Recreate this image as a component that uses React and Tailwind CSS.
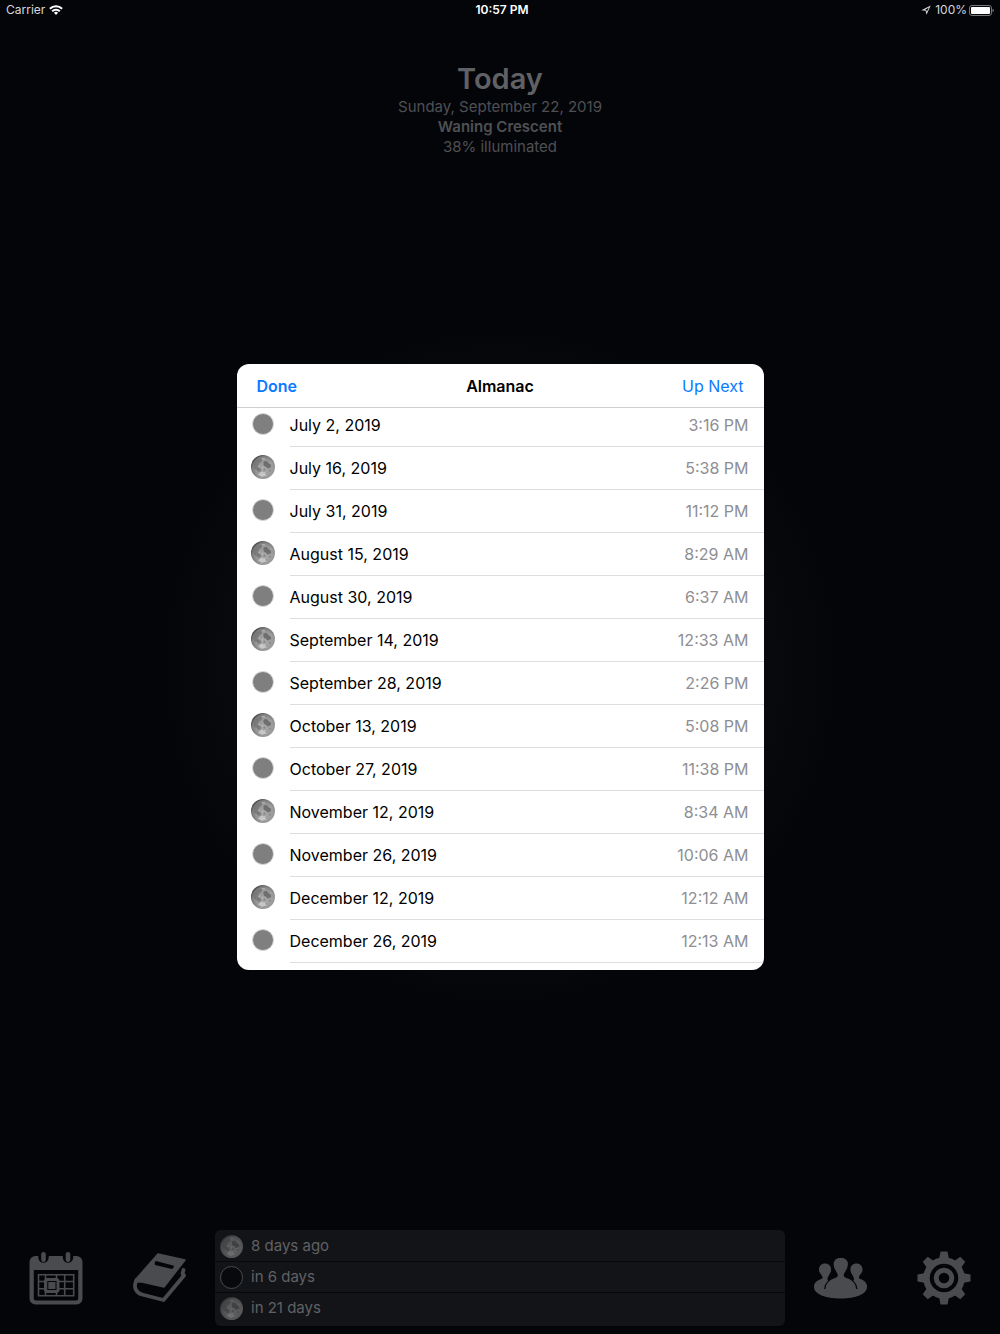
import { useState } from 'react';

const phases = [
  { date: 'July 2, 2019', time: '3:16 PM', full: false },
  { date: 'July 16, 2019', time: '5:38 PM', full: true },
  { date: 'July 31, 2019', time: '11:12 PM', full: false },
  { date: 'August 15, 2019', time: '8:29 AM', full: true },
  { date: 'August 30, 2019', time: '6:37 AM', full: false },
  { date: 'September 14, 2019', time: '12:33 AM', full: true },
  { date: 'September 28, 2019', time: '2:26 PM', full: false },
  { date: 'October 13, 2019', time: '5:08 PM', full: true },
  { date: 'October 27, 2019', time: '11:38 PM', full: false },
  { date: 'November 12, 2019', time: '8:34 AM', full: true },
  { date: 'November 26, 2019', time: '10:06 AM', full: false },
  { date: 'December 12, 2019', time: '12:12 AM', full: true },
  { date: 'December 26, 2019', time: '12:13 AM', full: false },
];

const upcoming = [
  { label: '8 days ago', full: true },
  { label: 'in 6 days', full: false },
  { label: 'in 21 days', full: true },
];

const FullMoon = ({ className }) => (
  <svg viewBox="0 0 24 24" className={className} aria-hidden="true">
    <defs>
      <radialGradient id="moonShade" cx="0.6" cy="0.6" r="0.64">
        <stop offset="0" stopColor="#a8a8a8" />
        <stop offset="0.6" stopColor="#989898" />
        <stop offset="0.85" stopColor="#7c7c7c" />
        <stop offset="1" stopColor="#3c3c3c" />
      </radialGradient>
      <filter id="mariaBlur">
        <feGaussianBlur stdDeviation="0.4" />
      </filter>
    </defs>
    <circle cx="12" cy="12" r="12" fill="url(#moonShade)" />
    <g filter="url(#mariaBlur)">
      <path fill="#6c6c6c" opacity="0.6" d="M3 9c1-3 4-5 7-5 2 1 1 3-1 4s-1 5-3 7c-3 0-4-3-3-6z" />
      <path fill="#545454" opacity="0.65" d="M13 6.500c1.500-1 3.500-.5 4 1s1.500.5 2.500 2 .5 3.500-.5 3-1.500 1.500-2.500 1-1-2-2-2-2-1-2-2.500-.5-1.500.5-2.500z" />
      <path fill="#5e5e5e" opacity="0.5" d="M6 13c2-1 4 0 4 2s-2 2-4 1zM18.500 14.500c1 0 1.500 1 1 2s-1.500 0-1-2zM12.500 14c1-.5 2 0 2 1s-1.500 1-2 0z" />
      <path fill="#d8d8d8" opacity="0.7" d="M9 17.500l2-1 1.500 1 2-.5-.5 2 2 1.500-3 .5-2 1-2-1.500-2-.5z" />
      <path fill="#c4c4c4" opacity="0.6" d="M7.500 10.500h1.500v1.500h-1.500zM11 3h3v1.500h-3zM10.500 12l1.500-.5.500 2-1.500.5zM19 7l1.500 1-.5 1z" />
    </g>
  </svg>
);

const CalendarIcon = () => (
  <svg viewBox="0 0 54 54" className="size-[54px]" fill="currentColor" aria-hidden="true">
    <path
      fillRule="evenodd"
      d="M6.500 5H9.300V6.500a5.200 5.200 0 0 0 10.400 0V5H33.800V6.500a5.200 5.200 0 0 0 10.400 0V5H47.500a6 6 0 0 1 6 6V47.500a6 6 0 0 1-6 6H6.500a6 6 0 0 1-6-6V11a6 6 0 0 1 6-6zM4.800 19V47.500a2 2 0 0 0 2 2H47.200a2 2 0 0 0 2-2V19z"
    />
    <rect x="12.200" y="1" width="4.600" height="10" rx="2.300" />
    <rect x="36.700" y="1" width="4.600" height="10" rx="2.300" />
    <path
      fill="none"
      stroke="currentColor"
      strokeWidth="1.600"
      d="M9.500 23.700H44.700V44.800H9.500zM9.500 30.500H44.700M9.500 37.800H44.700M16.500 23.700V44.800M27.500 23.700V44.800M35.700 23.700V44.800"
    />
    {/* highlighted day */}
    <path d="M17 27H28.500L30.500 29V40L28.500 42H17L15 40V29z" />
    <rect x="18.800" y="30.500" width="8.200" height="8" fill="none" stroke="#040509" strokeWidth="1" />
  </svg>
);

const BookIcon = () => (
  <svg viewBox="0 0 54 54" className="size-[54px]" aria-hidden="true">
    <path
      fill="currentColor"
      stroke="currentColor"
      strokeWidth="1.500"
      strokeLinejoin="round"
      d="M25 3L52 9 31 36 9 31 3 31Q1 30 3 28z"
    />
    <path
      fill="none"
      stroke="currentColor"
      strokeWidth="3.800"
      strokeLinejoin="round"
      strokeLinecap="round"
      d="M3.500 29C0 36 3 42 9 43.500L30.500 49 51 24.500 49.500 22.500 50.500 19"
    />
    <path fill="#040509" d="M23 10L41 14.700Q41 17 39 18L22 13.900Q21 11 23 10z" />
  </svg>
);

const PeopleIcon = () => (
  <svg viewBox="-1 0 54 54" className="size-[54px]" fill="currentColor" aria-hidden="true">
    <path d="M11 12.500c4 0 6.500 3 6 7-.4 3.600-3.500 5.800-3.500 8.500 0 1.500 1.500 2 3 2.500L10.500 38 0 36c0-4 3-6.500 6.500-7.700 1-.3 2-.8 2-1.800C8.500 24 5.400 22.500 5 19.500c-.4-4 2-7 6-7z" />
    <path d="M42.500 12.500c-4 0-6.500 3-6 7 .4 3.600 3.500 5.800 3.500 8.500 0 1.500-1.500 2-3 2.500L43 38l10-2c0-4-2.500-6.500-6-7.700-1-.3-2-.8-2-1.800 0-2.500 3.100-4 3.500-7 .4-4-2-7-6-7z" />
    <path d="M0 36Q0 32 5 30L10.500 38 16 30H37.500L43 38 48.500 30Q53 32 53 36C53 43 42 47.500 26.700 47.500S0 43 0 36z" />
    <path
      stroke="#040509"
      strokeWidth="1.200"
      d="M10.700 38C11 32 15.500 28 21.500 26.200 23.500 25.500 23.500 23.500 22.500 22 20.500 19.500 19 17 19 13.500 19 9 22 6.200 26.700 6.200S34.500 9 34.500 13.500C34.500 17 33 19.500 31 22 30 23.500 30 25.500 32 26.200 38 28 42.500 32 42.800 38"
    />
  </svg>
);

const GearIcon = () => (
  <svg viewBox="0 0 54 54" className="size-[54px]" aria-hidden="true">
    {[0, 45, 90, 135, 180, 225, 270, 315].map((angle) => (
      <path key={angle} fill="currentColor" d="M23.500 .5h7l1.500 8H22z" transform={`rotate(${angle} 27 27)`} />
    ))}
    <circle cx="27" cy="27" r="17.500" fill="none" stroke="currentColor" strokeWidth="6.500" />
    <circle cx="27" cy="27" r="7.800" fill="none" stroke="currentColor" strokeWidth="5" />
  </svg>
);

const StatusBar = () => (
  <div className="grid grid-cols-3 items-center h-5 px-1.5 text-[12px] leading-5 text-[#d8d8da]">
    <div className="flex items-center gap-1">
      <span>Carrier</span>
      <svg viewBox="0 0 14 10" className="w-3.5 h-2.5" fill="none" stroke="#fff" strokeWidth="2" aria-hidden="true">
        <path d="M.9 3.700a8.700 8.700 0 0 1 12.200 0M3.200 6.200a5.400 5.400 0 0 1 7.600 0" />
        <path fill="#fff" stroke="none" d="M4.900 7.800a3 3 0 0 1 4.200 0L7 10z" />
      </svg>
    </div>
    <div className="pl-1 text-center font-semibold text-white">10:57 PM</div>
    <div className="flex items-center justify-end gap-1">
      <svg viewBox="0 0 10 10" className="size-2.5" aria-hidden="true">
        <path fill="currentColor" fillRule="evenodd" d="M.3 5.200L9.700.6 5.500 9.700 4.600 5.700zM4 4.700L5.300 5 5.800 6.700 7.900 2.400z" />
      </svg>
      <span>100%</span>
      <svg viewBox="0 0 25 11" className="w-[25px] h-[11px] -ml-0.5" aria-hidden="true">
        <rect x="0.500" y="0.500" width="22" height="10" rx="2.500" fill="none" stroke="#77787a" />
        <rect x="2" y="2" width="19" height="7" rx="1" fill="#fff" />
        <path fill="#77787a" d="M23.500 3.800q1.500.6 1.500 1.700t-1.500 1.700z" />
      </svg>
    </div>
  </div>
);

const Almanac = ({ onDone }) => (
  <div className="fixed inset-0 flex items-center justify-center p-4">
    <div role="dialog" aria-labelledby="almanac-title" className="w-full max-w-[527px] rounded-xl bg-white overflow-hidden">
      <div className="grid grid-cols-3 items-center h-11 px-5 border-b border-[#cfcfd1]">
        <button type="button" onClick={onDone} className="text-left text-[16px] font-semibold text-[#0a7aff]">
          Done
        </button>
        <h2 id="almanac-title" className="text-center text-[16px] font-semibold text-black">Almanac</h2>
        <button type="button" className="text-right text-[16px] text-[#0a7aff]">Up Next</button>
      </div>
      <div className="overflow-hidden pb-[7px]">
        <table className="-mt-1 w-full border-separate border-spacing-0 text-[16px] leading-5">
          <tbody>
            {phases.map(({ date, time, full }) => (
              <tr key={date} className="h-[43px]">
                <td className="w-[53px] p-0 pl-3.5 pb-1">
                  {full ? (
                    <FullMoon className="size-6" />
                  ) : (
                    <div className="size-[22px] ml-px rounded-full border border-[#d8d8d8] bg-[#7f7f7f]" />
                  )}
                </td>
                <td className="p-0 border-b border-[#dedee0] text-black">{date}</td>
                <td className="p-0 pr-[15px] border-b border-[#dedee0] text-right text-[#8e8e93]">{time}</td>
              </tr>
            ))}
          </tbody>
        </table>
      </div>
    </div>
  </div>
);

export default function App() {
  const [open, setOpen] = useState(true);

  return (
    <div className="min-h-screen flex flex-col bg-[#040509] bg-[radial-gradient(circle_340px_at_50%_50%,#0d0e11_0%,#08090c_80%,#040509_100%)] font-['Inter','Liberation_Sans',sans-serif]">
      <StatusBar />

      <header className="pt-10 text-center text-[15px] leading-5 text-[#4f5053]">
        <h1 className="text-[29px] leading-[37px] font-semibold text-[#606164]">Today</h1>
        <p>Sunday, September 22, 2019</p>
        <p className="font-semibold">Waning Crescent</p>
        <p>38% illuminated</p>
      </header>

      <nav className="mt-auto grid grid-cols-[208px_1fr_208px] items-center px-1 pb-2 text-[#4a4b4e]">
        <div className="flex justify-around">
          <button type="button" aria-label="Calendar" onClick={() => setOpen(true)}><CalendarIcon /></button>
          <button type="button" aria-label="Journal"><BookIcon /></button>
        </div>
        <div className="px-[3px]">
          <ul className="rounded-md overflow-hidden pt-px pb-0.5 divide-y divide-[#07080b] bg-[#131418] text-[15px] text-[#606164]">
            {upcoming.map(({ label, full }) => (
              <li key={label} className="flex items-center gap-2 h-[31px] pl-[5px]">
                {full ? (
                  <FullMoon className="size-[23px] opacity-50" />
                ) : (
                  <div className="size-[23px] rounded-full border border-[#4a4b4e] bg-[#08090c]" />
                )}
                <span>{label}</span>
              </li>
            ))}
          </ul>
        </div>
        <div className="flex justify-around">
          <button type="button" aria-label="Community"><PeopleIcon /></button>
          <button type="button" aria-label="Settings"><GearIcon /></button>
        </div>
      </nav>

      {open && <Almanac onDone={() => setOpen(false)} />}
    </div>
  );
}
